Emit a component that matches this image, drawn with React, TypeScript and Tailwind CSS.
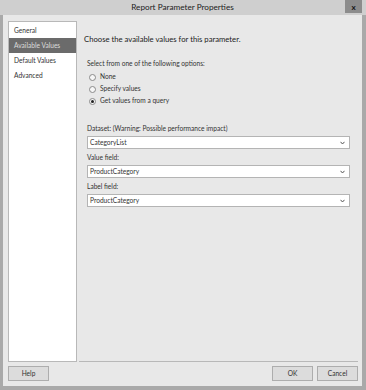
import React from "react";

const font = { fontFamily: 'Lato, "Open Sans", sans-serif' };

function Radio({ checked, label }: { checked?: boolean; label: string }) {
  return (
    <div className="flex items-center h-[12px] gap-[4px]">
      <div className="w-[7px] h-[7px] rounded-full border border-[#8a8a8a] bg-[#f6f6f6] flex items-center justify-center">
        {checked && <div className="w-[3px] h-[3px] rounded-full bg-[#222]" />}
      </div>
      <span>{label}</span>
    </div>
  );
}

function Select({ value }: { value: string }) {
  return (
    <div className="h-[13px] bg-white border border-[#b4b4b4] flex items-center justify-between pl-[2px] pr-[4px]">
      <span>{value}</span>
      <svg width="5" height="4" viewBox="0 0 5 4">
        <path d="M0.5 0.8 L2.5 3 L4.5 0.8" fill="none" stroke="#555" strokeWidth="1" />
      </svg>
    </div>
  );
}

export default function App() {
  return (
    <div
      className="w-[366px] h-[390px] bg-[#a9a9a9] flex flex-col pl-[3px] pr-[4px] pb-[4px] text-[#333]"
      style={font}
    >
      <div className="h-[15px] relative flex items-center justify-center bg-[#cfcfcf] -ml-[3px] -mr-[4px] pl-[3px] pr-[4px]">
        <span className="text-[8.2px] text-[#222]">Report Parameter Properties</span>
        <div className="absolute right-[4px] top-0 w-[17px] h-[13px] bg-[#8c8c8c] flex items-center justify-center">
          <span className="text-[8px] font-bold text-[#111] leading-none">x</span>
        </div>
      </div>
      <div className="flex-1 bg-[#e8e8e8] flex flex-col pt-[6px] pl-[5px] pr-[4px] text-[6.6px]">
        <div className="flex h-[341px]">
          <div className="w-[69px] bg-white border border-[#b8b8b8] flex flex-col pt-[1px]">
            <div className="h-[15px] flex items-center pl-[5px]">General</div>
            <div className="h-[15px] flex items-center pl-[5px] bg-[#6b6b6b] text-[#dcdcdc]">Available Values</div>
            <div className="h-[15px] flex items-center pl-[5px]">Default Values</div>
            <div className="h-[15px] flex items-center pl-[5px]">Advanced</div>
          </div>
          <div className="flex-1 ml-[2px] border-b border-[#b8b8b8] flex flex-col pl-[5px] pr-[8px]">
            <div className="text-[7.7px] mt-[13px] text-[#222]">Choose the available values for this parameter.</div>
            <div className="ml-[3px] mt-[13px]">
              <div>Select from one of the following options:</div>
              <div className="ml-[2px] mt-[3px] flex flex-col">
                <Radio label="None" />
                <Radio label="Specify values" />
                <Radio checked label="Get values from a query" />
              </div>
              <div className="mt-[17px] leading-[8px]">Dataset: (Warning: Possible performance impact)</div>
              <div className="mt-[4px]">
                <Select value="CategoryList" />
              </div>
              <div className="mt-[4px] leading-[8px]">Value field:</div>
              <div className="mt-[4px]">
                <Select value="ProductCategory" />
              </div>
              <div className="mt-[4px] leading-[8px]">Label field:</div>
              <div className="mt-[4px]">
                <Select value="ProductCategory" />
              </div>
            </div>
          </div>
        </div>
        <div className="flex justify-between mt-[4px]">
          <button className="w-[41px] h-[15px] bg-[#dcdcdc] border border-[#adadad] text-[6.6px]">Help</button>
          <div className="flex gap-[4px]">
            <button className="w-[41px] h-[15px] bg-[#dcdcdc] border border-[#adadad] text-[6.6px]">OK</button>
            <button className="w-[41px] h-[15px] bg-[#dcdcdc] border border-[#adadad] text-[6.6px]">Cancel</button>
          </div>
        </div>
      </div>
    </div>
  );
}
